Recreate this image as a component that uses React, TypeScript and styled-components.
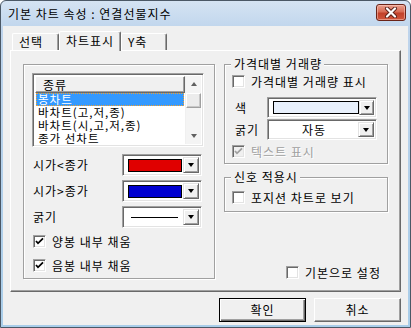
import * as React from "react";
import styled, { createGlobalStyle } from "styled-components";

const GlobalStyle = createGlobalStyle`
  body {
    margin: 0;
    font-family: "Noto Sans CJK KR", "Liberation Sans", sans-serif;
    font-size: 12px;
    letter-spacing: 1px;
    color: #000;
  }
`;

const Window = styled.div`
  width: 411px;
  height: 328px;
  box-sizing: border-box;
  border: 1px solid #4b5866;
  border-radius: 6px 6px 0 0;
  background: linear-gradient(#d5e3f3, #bed4ec 30px, #a9cde9);
  display: flex;
  flex-direction: column;
  overflow: hidden;
`;

const TitleBar = styled.div`
  height: 25px;
  display: flex;
  align-items: center;
  justify-content: space-between;
  padding: 0 4px 0 7px;
  flex-shrink: 0;
`;

const Title = styled.span`
  font-size: 12px;
  line-height: 14px;
`;

const CloseButton = styled.div`
  width: 30px;
  height: 17px;
  box-sizing: border-box;
  margin-top: -2px;
  border: 1px solid #6b2418;
  border-radius: 3px;
  background: linear-gradient(#eaa08e, #d86c55 45%, #c2412a 55%, #d0563c);
  box-shadow: inset 0 0 0 1px rgba(255, 210, 200, 0.5);
  display: flex;
  align-items: center;
  justify-content: center;
`;

const Client = styled.div`
  flex: 1;
  margin: 0 2px 2px;
  background: #f0f0f0;
  display: flex;
  flex-direction: column;
  padding: 5px 7px 0;
`;

const TabStrip = styled.div`
  height: 19px;
  display: flex;
  align-items: flex-end;
  padding-left: 2px;
  position: relative;
  z-index: 1;
`;

const Tab = styled.div<{ $w: number; $active?: boolean }>`
  width: ${p => p.$w}px;
  height: ${p => (p.$active ? 20 : 17)}px;
  margin-bottom: ${p => (p.$active ? -1 : 0)}px;
  box-sizing: border-box;
  background: #f0f0f0;
  border-top: 1px solid #fff;
  border-left: 1px solid #fff;
  border-right: 1px solid #696969;
  box-shadow: inset -1px 0 0 #a0a0a0;
  border-radius: 2px 2px 0 0;
  padding-left: 6px;
  line-height: ${p => (p.$active ? 17 : 16)}px;
  white-space: nowrap;
`;

const Panel = styled.div`
  width: 391px;
  height: 242px;
  box-sizing: border-box;
  border: 1px solid;
  border-color: #fff #696969 #696969 #fff;
  box-shadow: inset -1px -1px 0 #a0a0a0;
  padding: 13px 0 0 12px;
  display: grid;
  grid-template-columns: 192px 164px;
  column-gap: 9px;
  align-items: start;
`;

const Etched = styled.div`
  box-sizing: border-box;
  border: 1px solid #a0a0a0;
  box-shadow: inset 1px 1px 0 #fff, 1px 1px 0 #fff;
`;

const LeftGroup = styled(Etched)`
  height: 215px;
  padding: 8px 0 0 8px;
  display: flex;
  flex-direction: column;
`;

const Sunken = styled.div`
  box-sizing: border-box;
  border: 1px solid;
  border-color: #a0a0a0 #fff #fff #a0a0a0;
  box-shadow: inset 1px 1px 0 #696969, inset -1px -1px 0 #e3e3e3;
`;

const ListBox = styled(Sunken)`
  width: 172px;
  height: 74px;
  padding: 2px;
  background: #fff;
  display: grid;
  grid-template-columns: 1fr 16px;
  overflow: hidden;
`;

const ListColumn = styled.div`
  display: flex;
  flex-direction: column;
  overflow: hidden;
`;

const ListHeader = styled.div`
  height: 17px;
  flex-shrink: 0;
  box-sizing: border-box;
  background: #f0f0f0;
  border: 1px solid;
  border-color: #fff #696969 #696969 #fff;
  box-shadow: inset -1px -1px 0 #a0a0a0;
  padding-left: 7px;
  line-height: 15px;
`;

const ListItem = styled.div<{ $selected?: boolean }>`
  height: 13px;
  flex-shrink: 0;
  box-sizing: border-box;
  font-size: 11.5px;
  line-height: 13px;
  padding-left: 2px;
  margin: 0 1px;
  white-space: nowrap;
  background: ${p => (p.$selected ? "#3399ff" : "transparent")};
  color: ${p => (p.$selected ? "#fff" : "#000")};
  outline: ${p => (p.$selected ? "1px dotted #f0a030" : "none")};
  outline-offset: -1px;
`;

const ScrollBar = styled.div`
  display: flex;
  flex-direction: column;
  background: #f4f4f4;
  border-left: 1px solid #f0f0f0;
`;

const ScrollArrow = styled.div`
  height: 16px;
  display: flex;
  align-items: center;
  justify-content: center;
  flex-shrink: 0;
`;

const Thumb = styled.div`
  height: 15px;
  margin-top: 1px;
  box-sizing: border-box;
  background: #ececec;
  border: 1px solid;
  border-color: #fff #a0a0a0 #a0a0a0 #fff;
  box-shadow: inset -1px -1px 0 #c8c8c8;
`;

const Track = styled.div`
  flex: 1;
`;

const Triangle = styled.span<{ $up?: boolean; $color?: string }>`
  width: 0;
  height: 0;
  border-left: 3.5px solid transparent;
  border-right: 3.5px solid transparent;
  ${p =>
    p.$up
      ? `border-bottom: 4px solid ${p.$color || "#000"};`
      : `border-top: 4px solid ${p.$color || "#000"};`}
`;

const FieldGrid = styled.div<{ $label: number; $gap: number; $top: number; $left?: number }>`
  display: grid;
  grid-template-columns: ${p => p.$label}px auto;
  row-gap: ${p => p.$gap}px;
  align-items: center;
  margin-top: ${p => p.$top}px;
  margin-left: ${p => p.$left || 0}px;
`;

const FieldLabel = styled.span`
  padding-left: 1px;
  line-height: 14px;
  white-space: nowrap;
`;

const ComboFrame = styled(Sunken)<{ $w: number; $h: number }>`
  width: ${p => p.$w}px;
  height: ${p => p.$h}px;
  padding: 2px;
  background: #fff;
  display: flex;
`;

const ComboValue = styled.div<{ $center?: boolean }>`
  flex: 1;
  display: flex;
  align-items: center;
  justify-content: ${p => (p.$center ? "center" : "flex-start")};
  padding-left: ${p => (p.$center ? 0 : 3)}px;
`;

const Swatch = styled.div<{ $color: string; $w: number }>`
  width: ${p => p.$w}px;
  height: 13px;
  box-sizing: border-box;
  border: 1px solid #000;
  background: ${p => p.$color};
`;

const LineSample = styled.div`
  width: 47px;
  height: 1px;
  margin-left: 3px;
  background: #000;
`;

const DropButton = styled.div`
  width: 16px;
  box-sizing: border-box;
  background: #f0f0f0;
  border: 1px solid;
  border-color: #e3e3e3 #696969 #696969 #e3e3e3;
  box-shadow: inset 1px 1px 0 #fff, inset -1px -1px 0 #a0a0a0;
  display: flex;
  align-items: center;
  justify-content: center;
`;

const CheckRow = styled.label<{ $disabled?: boolean }>`
  display: flex;
  align-items: center;
  gap: 6px;
  height: 16px;
  color: ${p => (p.$disabled ? "#a0a0a0" : "#000")};
  text-shadow: ${p => (p.$disabled ? "1px 1px 0 #fff" : "none")};
  white-space: nowrap;
`;

const Box = styled(Sunken)<{ $disabled?: boolean }>`
  width: 13px;
  height: 13px;
  flex-shrink: 0;
  background: ${p => (p.$disabled ? "#f0f0f0" : "#fff")};
  display: flex;
  align-items: center;
  justify-content: center;
`;

const CheckList = styled.div`
  display: flex;
  flex-direction: column;
  gap: 8px;
  margin-top: 5px;
  padding-left: 1px;
`;

const RightColumn = styled.div`
  height: 215px;
  display: flex;
  flex-direction: column;
`;

const Group = styled(Etched)<{ $h: number; $top?: number; $pad: number }>`
  position: relative;
  height: ${p => p.$h}px;
  margin-top: ${p => p.$top || 0}px;
  padding: ${p => p.$pad}px 0 0 7px;
  display: flex;
  flex-direction: column;
`;

const Caption = styled.span`
  position: absolute;
  top: -8px;
  left: 6px;
  padding: 0 2px 0 3px;
  background: #f0f0f0;
  line-height: 14px;
  white-space: nowrap;
`;

const IndentRow = styled.div<{ $top: number }>`
  margin-top: ${p => p.$top}px;
`;

const DefaultRow = styled.div`
  margin-top: auto;
  display: flex;
  padding-left: 62px;
  margin-bottom: -1px;
`;

const ButtonRow = styled.div`
  display: flex;
  justify-content: flex-end;
  gap: 8px;
  margin-top: 6px;
`;

const PushButton = styled.div<{ $default?: boolean }>`
  width: 87px;
  height: 24px;
  box-sizing: border-box;
  background: #f0f0f0;
  border: 1px solid;
  border-color: ${p => (p.$default ? "#000" : "#fff #696969 #696969 #fff")};
  box-shadow: ${p =>
    p.$default
      ? "inset 1px 1px 0 #fff, inset -1px -1px 0 #696969, inset -2px -2px 0 #a0a0a0"
      : "inset -1px -1px 0 #a0a0a0"};
  display: flex;
  align-items: center;
  justify-content: center;
  line-height: 14px;
`;

const CheckMark = ({ color = "#000" }: { color?: string }) => (
  <svg width="9" height="9" viewBox="0 0 9 9">
    <polyline points="1,4 3,6.3 8,1.3" fill="none" stroke={color} strokeWidth="1.8" />
  </svg>
);

const Check = ({ label, checked, disabled }: { label: string; checked?: boolean; disabled?: boolean }) => (
  <CheckRow $disabled={disabled}>
    <Box $disabled={disabled}>{checked && <CheckMark color={disabled ? "#a0a0a0" : "#000"} />}</Box>
    {label}
  </CheckRow>
);

const Combo = ({ w, h, center, children }: { w: number; h: number; center?: boolean; children: React.ReactNode }) => (
  <ComboFrame $w={w} $h={h}>
    <ComboValue $center={center}>{children}</ComboValue>
    <DropButton>
      <Triangle />
    </DropButton>
  </ComboFrame>
);

const items = ["봉차트", "바차트(고,저,종)", "바차트(시,고,저,종)", "종가 선차트", "종가 점차트"];

const App = () => (
  <>
    <GlobalStyle />
    <Window>
      <TitleBar>
        <Title>기본 차트 속성 : 연결선물지수</Title>
        <CloseButton>
          <svg width="14" height="11" viewBox="0 0 14 11">
            <path d="M3 1.5 L11 9.5 M11 1.5 L3 9.5" stroke="#5a2018" strokeWidth="4" strokeLinecap="round" />
            <path d="M3 1.5 L11 9.5 M11 1.5 L3 9.5" stroke="#fff" strokeWidth="2.2" strokeLinecap="round" />
          </svg>
        </CloseButton>
      </TitleBar>
      <Client>
        <TabStrip>
          <Tab $w={47}>선택</Tab>
          <Tab $w={62} $active>
            차트표시
          </Tab>
          <Tab $w={46}>Y축</Tab>
        </TabStrip>
        <Panel>
          <LeftGroup>
            <ListBox>
              <ListColumn>
                <ListHeader>종류</ListHeader>
                {items.map((item, i) => (
                  <ListItem key={item} $selected={i === 0}>
                    {item}
                  </ListItem>
                ))}
              </ListColumn>
              <ScrollBar>
                <ScrollArrow>
                  <Triangle $up $color="#606060" />
                </ScrollArrow>
                <Thumb />
                <Track />
                <ScrollArrow>
                  <Triangle $color="#606060" />
                </ScrollArrow>
              </ScrollBar>
            </ListBox>
            <FieldGrid $label={90} $gap={4} $top={7}>
              <FieldLabel>시가&lt;종가</FieldLabel>
              <Combo w={80} h={22}>
                <Swatch $color="#e00000" $w={54} />
              </Combo>
              <FieldLabel>시가&gt;종가</FieldLabel>
              <Combo w={80} h={22}>
                <Swatch $color="#0000d0" $w={54} />
              </Combo>
              <FieldLabel>굵기</FieldLabel>
              <Combo w={80} h={22}>
                <LineSample />
              </Combo>
            </FieldGrid>
            <CheckList>
              <Check label="양봉 내부 채움" checked />
              <Check label="음봉 내부 채움" checked />
            </CheckList>
          </LeftGroup>
          <RightColumn>
            <Group $h={100} $pad={8}>
              <Caption>가격대별 거래량</Caption>
              <Check label="가격대별 거래량 표시" />
              <FieldGrid $label={33} $gap={1} $top={8} $left={2}>
                <FieldLabel>색</FieldLabel>
                <Combo w={110} h={21}>
                  <Swatch $color="#e8f0fc" $w={86} />
                </Combo>
                <FieldLabel>굵기</FieldLabel>
                <Combo w={110} h={21} center>
                  자동
                </Combo>
              </FieldGrid>
              <IndentRow $top={3}>
                <Check label="텍스트 표시" checked disabled />
              </IndentRow>
            </Group>
            <Group $h={35} $top={13} $pad={11}>
              <Caption>신호 적용시</Caption>
              <Check label="포지션 차트로 보기" />
            </Group>
            <DefaultRow>
              <Check label="기본으로 설정" />
            </DefaultRow>
          </RightColumn>
        </Panel>
        <ButtonRow>
          <PushButton $default>확인</PushButton>
          <PushButton>취소</PushButton>
        </ButtonRow>
      </Client>
    </Window>
  </>
);

export default App;
